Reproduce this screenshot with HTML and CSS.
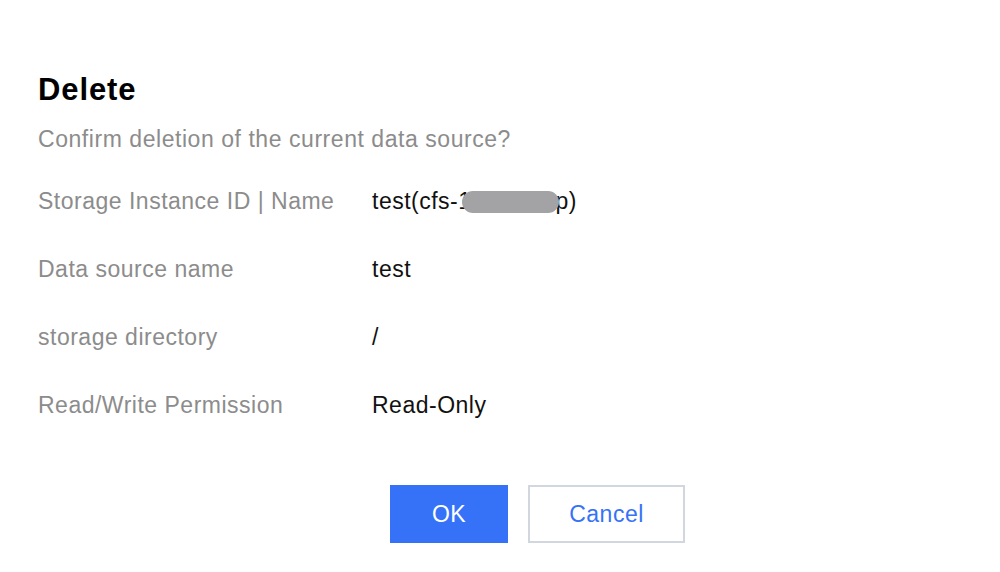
FILE: index.html
```html
<!DOCTYPE html>
<html>
<head>
<meta charset="utf-8">
<link rel="stylesheet" href="styles.css">
</head>
<body>
<div class="dialog">
  <h1 class="title">Delete</h1>
  <p class="subtitle">Confirm deletion of the current data source?</p>
  <div class="info">
    <div class="row">
      <div class="label">Storage Instance ID | Name</div>
      <div class="value"><span class="masked">test(cfs-1xxxxxxxp)<span class="blur"></span></span></div>
    </div>
    <div class="row">
      <div class="label">Data source name</div>
      <div class="value">test</div>
    </div>
    <div class="row">
      <div class="label">storage directory</div>
      <div class="value">/</div>
    </div>
    <div class="row">
      <div class="label">Read/Write Permission</div>
      <div class="value">Read-Only</div>
    </div>
  </div>
  <div class="footer">
    <button class="btn btn-primary">OK</button>
    <button class="btn btn-default">Cancel</button>
  </div>
</div>
</body>
</html>
```
FILE: styles.css
```css
html, body {
  margin: 0;
  padding: 0;
  background: #ffffff;
}
body {
  font-family: "Liberation Sans", Arial, sans-serif;
  width: 1000px;
  height: 572px;
  overflow: hidden;
}
.dialog {
  padding: 72px 0 0 38px;
}
.title {
  margin: 0;
  font-size: 31px;
  font-weight: bold;
  color: #000;
  line-height: 36px;
  letter-spacing: 0.9px;
}
.subtitle {
  margin: 16px 0 0 0;
  font-size: 23px;
  line-height: 30px;
  color: #8c8c8c;
  letter-spacing: 0.55px;
}
.info {
  margin-top: 32px;
  display: flex;
  flex-direction: column;
  gap: 38px;
}
.row {
  display: flex;
  font-size: 23px;
  line-height: 30px;
  letter-spacing: 0.5px;
}
.label {
  width: 334px;
  color: #8c8c8c;
}
.value {
  color: #111;
}
.masked {
  position: relative;
  display: inline-block;
}
.blur {
  position: absolute;
  left: 90px;
  top: 5px;
  width: 97px;
  height: 22px;
  border-radius: 11px;
  background: #a3a3a6;
}
.footer {
  margin-top: 65px;
  display: flex;
  gap: 20px;
  padding-left: 352px;
}
.btn {
  height: 58px;
  font-family: "Liberation Sans", Arial, sans-serif;
  font-size: 23px;
  letter-spacing: 0.5px;
  border-radius: 0;
  cursor: pointer;
  padding: 0;
}
.btn-primary {
  width: 118px;
  background: #3672f7;
  border: none;
  color: #fff;
}
.btn-default {
  width: 157px;
  background: #fff;
  border: 2px solid #d2d6de;
  color: #3672f7;
}
```
